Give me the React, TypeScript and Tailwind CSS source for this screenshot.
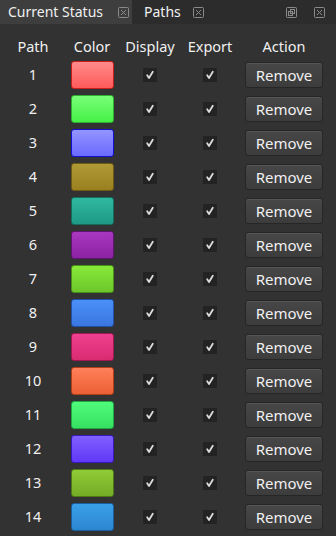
const rows = [
  { top: "#ff8a8a", bottom: "#ff5a5a", border: "#c81e1e" },
  { top: "#78ff78", bottom: "#46f046", border: "#2fae2f" },
  { top: "#9494ff", bottom: "#6a6aff", border: "#1010d0" },
  { top: "#b09a35", bottom: "#9a8020", border: "#6e5a14" },
  { top: "#30b8a0", bottom: "#1e9a85", border: "#146e5e" },
  { top: "#a838c0", bottom: "#8c22a4", border: "#5e1470" },
  { top: "#88e83a", bottom: "#6cc82a", border: "#4a9018" },
  { top: "#4a90f8", bottom: "#3a76e0", border: "#2050a8" },
  { top: "#f04090", bottom: "#d82c70", border: "#a01850" },
  { top: "#ff805a", bottom: "#ec6035", border: "#b03e18" },
  { top: "#50fa7a", bottom: "#36e060", border: "#20a844" },
  { top: "#8060ff", bottom: "#6038f8", border: "#3a18c0" },
  { top: "#90cc38", bottom: "#74ac26", border: "#4e7818" },
  { top: "#3aa0e8", bottom: "#2c86d0", border: "#1a5e9e" },
];

const BoxX = () => (
  <svg width="11" height="11" viewBox="0 0 11 11" fill="none" stroke="#8a8a8a" strokeWidth="1">
    <rect x="0.5" y="0.5" width="10" height="10" rx="1" />
    <path d="M3 3 L8 8 M8 3 L3 8" />
  </svg>
);

const FloatIcon = () => (
  <svg width="11" height="11" viewBox="0 0 11 11" fill="none" stroke="#8a8a8a" strokeWidth="1">
    <rect x="0.5" y="0.5" width="10" height="10" rx="1" />
    <rect x="4.5" y="2.5" width="4" height="4" />
    <rect x="2.5" y="4.5" width="4" height="4" />
  </svg>
);

const Check = () => (
  <div className="w-[14px] h-[14px] bg-[#232323] flex items-center justify-center">
    <svg width="10" height="10" viewBox="0 0 10 10" fill="none" stroke="#dcdcdc" strokeWidth="1.8" strokeLinecap="round" strokeLinejoin="round">
      <path d="M2.2 5.3 L4 8 L7.8 1.8" />
    </svg>
  </div>
);

export default function App() {
  return (
    <div
      className="w-[336px] h-[536px] bg-[#323232] text-[#f0f0f0] overflow-hidden"
      style={{ fontFamily: '"Noto Sans", "Open Sans", sans-serif' }}
    >
      {/* Tab bar */}
      <div className="h-[24px] flex items-center bg-[#2c2c2c]">
        <div className="h-full w-[132px] bg-[#3e3e3e] flex items-center pl-[8px] gap-[15px]">
          <span className="text-[14px] leading-none">Current Status</span>
          <BoxX />
        </div>
        <div className="h-full flex items-center pl-[12px] gap-[12px]">
          <span className="text-[14px] leading-none">Paths</span>
          <BoxX />
        </div>
        <div className="ml-auto flex items-center gap-[17px] pr-[11px]">
          <FloatIcon />
          <BoxX />
        </div>
      </div>

      {/* Header */}
      <div className="grid grid-cols-[66px_52px_64px_56px_92px] pt-[12px] pb-[2px] text-[14.5px] leading-[20px] text-center">
        <span>Path</span>
        <span>Color</span>
        <span>Display</span>
        <span>Export</span>
        <span>Action</span>
      </div>

      {/* Rows */}
      <div className="flex flex-col">
        {rows.map((r, i) => (
          <div key={i} className="grid grid-cols-[66px_52px_64px_56px_92px] h-[34px] items-center">
            <span className="text-center text-[14.5px]">{i + 1}</span>
            <div className="flex justify-center">
              <div
                className="w-[43px] h-[28px] rounded-[3px] border"
                style={{
                  background: `linear-gradient(${r.top}, ${r.bottom})`,
                  borderColor: r.border,
                }}
              />
            </div>
            <div className="flex justify-center">
              <Check />
            </div>
            <div className="flex justify-center">
              <Check />
            </div>
            <div className="flex justify-center">
              <button className="w-[78px] h-[26px] rounded-[3px] border border-[#262626] bg-gradient-to-b from-[#474747] to-[#3c3c3c] text-[15px] leading-none text-[#f0f0f0] shadow-[inset_0_1px_0_#555]">
                Remove
              </button>
            </div>
          </div>
        ))}
      </div>
    </div>
  );
}
